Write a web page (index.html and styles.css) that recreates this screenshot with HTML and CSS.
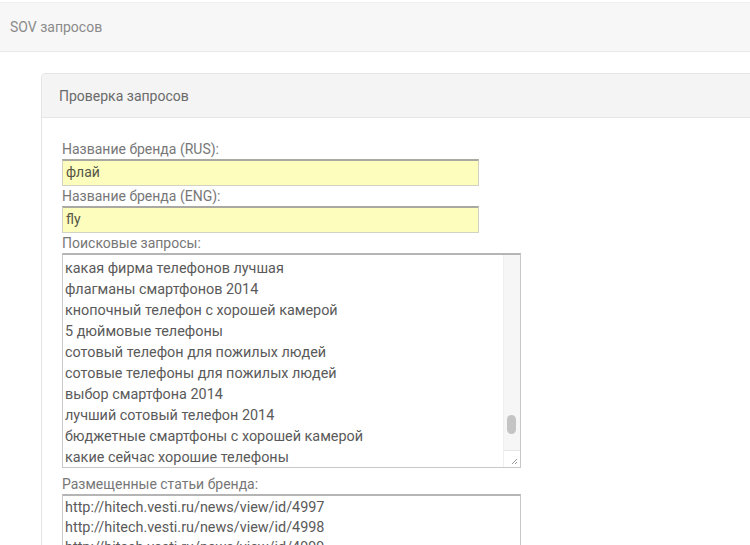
FILE: index.html
```html
<!DOCTYPE html>
<html lang="ru">
<head>
<meta charset="utf-8">
<title>SOV запросов</title>
<link rel="stylesheet" href="styles.css">
</head>
<body>
<div class="topbar"><span class="brand">SOV запросов</span></div>
<div class="content">
  <div class="panel">
    <div class="panel-head">Проверка запросов</div>
    <div class="panel-body">
      <div class="label">Название бренда (RUS):</div>
      <div class="input">флай</div>
      <div class="label">Название бренда (ENG):</div>
      <div class="input">fly</div>
      <div class="label">Поисковые запросы:</div>
      <div class="area area-queries">
        <div class="area-text">
          <div>какая фирма телефонов лучшая</div>
          <div>флагманы смартфонов 2014</div>
          <div>кнопочный телефон с хорошей камерой</div>
          <div>5 дюймовые телефоны</div>
          <div>сотовый телефон для пожилых людей</div>
          <div>сотовые телефоны для пожилых людей</div>
          <div>выбор смартфона 2014</div>
          <div>лучший сотовый телефон 2014</div>
          <div>бюджетные смартфоны с хорошей камерой</div>
          <div>какие сейчас хорошие телефоны</div>
        </div>
        <div class="scrollbar">
          <div class="track"><div class="thumb"></div></div>
          <div class="grip">
            <svg width="15" height="15" viewBox="0 0 15 15"><path d="M13 8 L8 13 M13 11 L11 13" stroke="#999" stroke-width="1"/></svg>
          </div>
        </div>
      </div>
      <div class="label label-gap">Размещенные статьи бренда:</div>
      <div class="area area-links">
        <div class="area-text">
          <div>http://hitech.vesti.ru/news/view/id/4997</div>
          <div>http://hitech.vesti.ru/news/view/id/4998</div>
          <div>http://hitech.vesti.ru/news/view/id/4999</div>
        </div>
      </div>
    </div>
  </div>
</div>
</body>
</html>
```
FILE: styles.css
```css
html, body {
  margin: 0;
  padding: 0;
  background: #fff;
  overflow: hidden;
  font-family: Roboto, "Liberation Sans", Arial, sans-serif;
}
.topbar {
  margin-top: 2px;
  height: 48px;
  background: #f7f7f7;
  border-top: 1px solid #f0f0f0;
  border-bottom: 1px solid #e9e9e9;
  display: flex;
  align-items: center;
  padding-left: 10px;
}
.brand {
  font-size: 14px;
  color: #8a8a8a;
}
.content {
  padding: 21px 0 0 41px;
}
.panel {
  width: 780px;
  border: 1px solid #e4e4e4;
  border-radius: 4px;
}
.panel-head {
  height: 43px;
  background: #f4f4f4;
  border-bottom: 1px solid #e6e6e6;
  border-radius: 4px 4px 0 0;
  display: flex;
  align-items: center;
  padding-left: 17px;
  font-size: 14px;
  color: #6a6a6a;
}
.panel-body {
  padding: 21px 20px 0 20px;
}
.label {
  height: 20px;
  line-height: 20px;
  font-size: 14px;
  color: #777;
}
.label-gap {
  margin-top: 6px;
}
.input {
  box-sizing: border-box;
  width: 417px;
  height: 27px;
  background: #fdfdbd;
  border: 1px solid #d2d2c4;
  border-top: 2px solid #a9a9a2;
  padding-left: 3px;
  line-height: 23px;
  font-size: 14px;
  color: #555548;
}
.area {
  box-sizing: border-box;
  width: 459px;
  border: 1px solid #c9c9c9;
  border-top: 2px solid #b5b5b5;
  display: flex;
}
.area-queries {
  height: 215px;
}
.area-links {
  height: 80px;
}
.area-text {
  flex: 1;
  padding: 3px 0 0 2px;
  font-size: 14.4px;
  line-height: 21px;
  color: #5a5a5a;
  overflow: hidden;
  white-space: nowrap;
}
.area-links .area-text {
  line-height: 20px;
  padding-top: 2px;
}
.scrollbar {
  width: 16px;
  display: flex;
  flex-direction: column;
  border-left: 1px solid #efefef;
  background: #f6f6f6;
}
.track {
  flex: 1;
  position: relative;
}
.thumb {
  position: absolute;
  left: 3px;
  width: 9px;
  top: 160px;
  height: 19px;
  border-radius: 5px;
  background: #c4c4c4;
}
.grip {
  height: 16px;
  border-top: 1px solid #e6e6e6;
  background: #fff;
}
.grip svg {
  display: block;
}
```
